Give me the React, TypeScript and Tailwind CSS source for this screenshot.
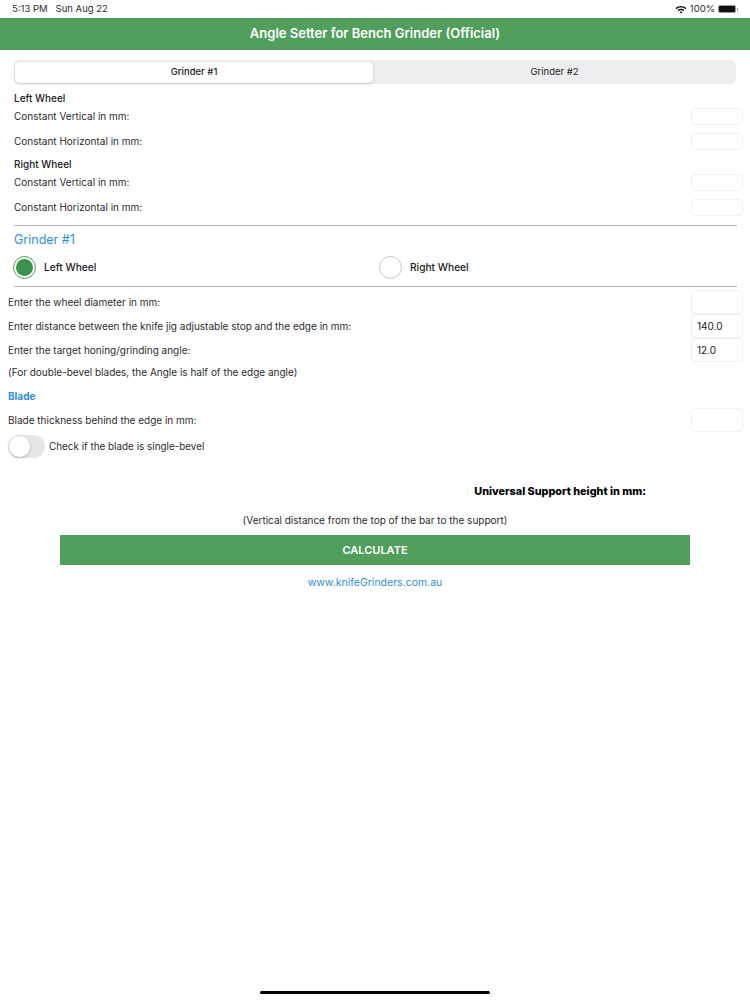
import React from 'react';

const FONT = "font-['Inter','Liberation_Sans',sans-serif]";

function Field({ value }: { value?: string }) {
  return (
    <div className="w-[52px] h-full border border-[#f1f1f3] rounded-[4px] bg-white flex items-center pl-[5px] text-[10px] text-[#1c1c1e]">
      {value}
    </div>
  );
}

function ConstantRow({ label, pt }: { label: string; pt: string }) {
  return (
    <div className={`flex items-center justify-between pl-[14px] pr-[7px] h-[17px] ${pt}`}>
      <span className="text-[10px] text-[#2c2c2e]">{label}</span>
      <Field />
    </div>
  );
}

function InputRow({ label, value }: { label: string; value?: string }) {
  return (
    <div className="flex items-center justify-between pl-[8px] pr-[7px] h-[24px]">
      <span className="text-[10px] text-[#2c2c2e]">{label}</span>
      <Field value={value} />
    </div>
  );
}

function Radio({ checked, label }: { checked?: boolean; label: string }) {
  return (
    <div className="flex items-center gap-[8px]">
      <div className={`w-[23px] h-[23px] rounded-full border flex items-center justify-center ${checked ? 'border-[#4f9e5c]' : 'border-[#c9c9cc]'}`}>
        {checked && <div className="w-[17px] h-[17px] rounded-full bg-[#3f9150]" />}
      </div>
      <span className="text-[10.2px] font-medium text-[#1c1c1e]">{label}</span>
    </div>
  );
}

export default function App() {
  return (
    <div className={`${FONT} relative min-h-[1000px] flex flex-col bg-white`}>
      {/* status bar */}
      <div className="h-[18px] flex items-center justify-between pl-[12px] pr-[12px] text-[9.5px] text-[#2c2c2e]">
        <div className="flex gap-[8px]">
          <span>5:13 PM</span>
          <span>Sun Aug 22</span>
        </div>
        <div className="flex items-center gap-[3px]">
          <svg width="12" height="9" viewBox="0 0 12 9" fill="#1c1c1e">
            <path d="M6 1C3.9 1 2 1.8.5 3.1l1 1.1C2.7 3.1 4.3 2.5 6 2.5s3.3.6 4.5 1.7l1-1.1C10 1.8 8.100 1 6 1z" />
            <path d="M6 3.800c-1.300 0-2.500.5-3.400 1.300l1 1.100C4.300 5.600 5.100 5.300 6 5.300s1.700.3 2.400.9l1-1.100C8.500 4.300 7.300 3.800 6 3.800z" />
            <path d="M6 6.500c-.6 0-1.100.2-1.500.6L6 8.700l1.500-1.600C7.100 6.700 6.600 6.500 6 6.500z" />
          </svg>
          <span>100%</span>
          <div className="flex items-center gap-[1px]">
            <div className="w-[18px] h-[8px] rounded-[2px] bg-[#111] border border-[#999]" />
            <div className="w-[1px] h-[3px] bg-[#999]" />
          </div>
        </div>
      </div>

      {/* header */}
      <div className="h-[32px] bg-[#519e5d] flex items-center justify-center text-white text-[13px] font-semibold">
        Angle Setter for Bench Grinder (Official)
      </div>

      {/* segmented tabs */}
      <div className="mt-[10px] mx-[14px] h-[24px] rounded-[6px] bg-[#eeeef0] flex items-center text-[9.5px] text-[#1c1c1e]">
        <div className="w-[358px] h-[21px] ml-[1px] rounded-[5px] bg-white shadow-[0_1px_3px_rgba(0,0,0,0.18)] flex items-center justify-center font-medium">
          Grinder #1
        </div>
        <div className="flex-1 flex items-center justify-center">Grinder #2</div>
      </div>

      {/* constants */}
      <div className="pl-[14px] mt-[8px] h-[12px] flex items-center text-[10px] font-medium text-[#1c1c1e]">Left Wheel</div>
      <ConstantRow label="Constant Vertical in mm:" pt="mt-[4px]" />
      <ConstantRow label="Constant Horizontal in mm:" pt="mt-[8px]" />
      <div className="pl-[14px] mt-[8px] h-[12px] flex items-center text-[10px] font-medium text-[#1c1c1e]">Right Wheel</div>
      <ConstantRow label="Constant Vertical in mm:" pt="mt-[4px]" />
      <ConstantRow label="Constant Horizontal in mm:" pt="mt-[8px]" />

      <div className="mt-[9px] ml-[14px] mr-[13px] h-[1px] bg-[#b8b8ba]" />

      <div className="mt-[7px] pl-[14px] h-[15px] flex items-center text-[12.5px] text-[#2f8fdc]">Grinder #1</div>

      {/* wheel selector */}
      <div className="mt-[8px] pl-[13px] flex">
        <div className="w-[366px]">
          <Radio checked label="Left Wheel" />
        </div>
        <Radio label="Right Wheel" />
      </div>

      <div className="mt-[7px] ml-[14px] mr-[13px] h-[1px] bg-[#b8b8ba]" />

      {/* inputs */}
      <div className="mt-[3px]">
        <InputRow label="Enter the wheel diameter in mm:" />
        <InputRow label="Enter distance between the knife jig adjustable stop and the edge in mm:" value="140.0" />
        <InputRow label="Enter the target honing/grinding angle:" value="12.0" />
      </div>
      <div className="mt-[4px] pl-[8px] h-[12px] flex items-center text-[10px] text-[#2c2c2e]">
        (For double-bevel blades, the Angle is half of the edge angle)
      </div>
      <div className="mt-[12px] pl-[8px] h-[12px] flex items-center text-[10px] font-bold text-[#2f8fdc]">Blade</div>
      <div className="mt-[6px]">
        <InputRow label="Blade thickness behind the edge in mm:" />
      </div>
      <div className="mt-[3px] pl-[8px] flex items-center gap-[4px]">
        <div className="w-[37px] h-[23px] rounded-full bg-[#e7e7e9] p-[1px]">
          <div className="w-[21px] h-[21px] rounded-full bg-white shadow-[0_1px_3px_rgba(0,0,0,0.25)]" />
        </div>
        <span className="text-[9.9px] text-[#2c2c2e]">Check if the blade is single-bevel</span>
      </div>

      {/* result */}
      <div className="mt-[27px] pr-[104px] h-[14px] flex items-center justify-end text-[10.8px] font-extrabold text-black">
        Universal Support height in mm:
      </div>
      <div className="mt-[14px] h-[14px] flex items-center justify-center text-[10px] text-[#2c2c2e]">
        (Vertical distance from the top of the bar to the support)
      </div>
      <div className="mt-[8px] mx-[60px] h-[30px] bg-[#519e5d] flex items-center justify-center text-[11px] font-semibold text-white">
        CALCULATE
      </div>
      <div className="mt-[11px] h-[14px] flex items-center justify-center text-[10.5px] text-[#2f8fdc]">
        www.knifeGrinders.com.au
      </div>

      {/* home indicator */}
      <div className="mt-auto mb-[6px] mx-auto w-[230px] h-[3px] rounded-full bg-black" />
    </div>
  );
}
